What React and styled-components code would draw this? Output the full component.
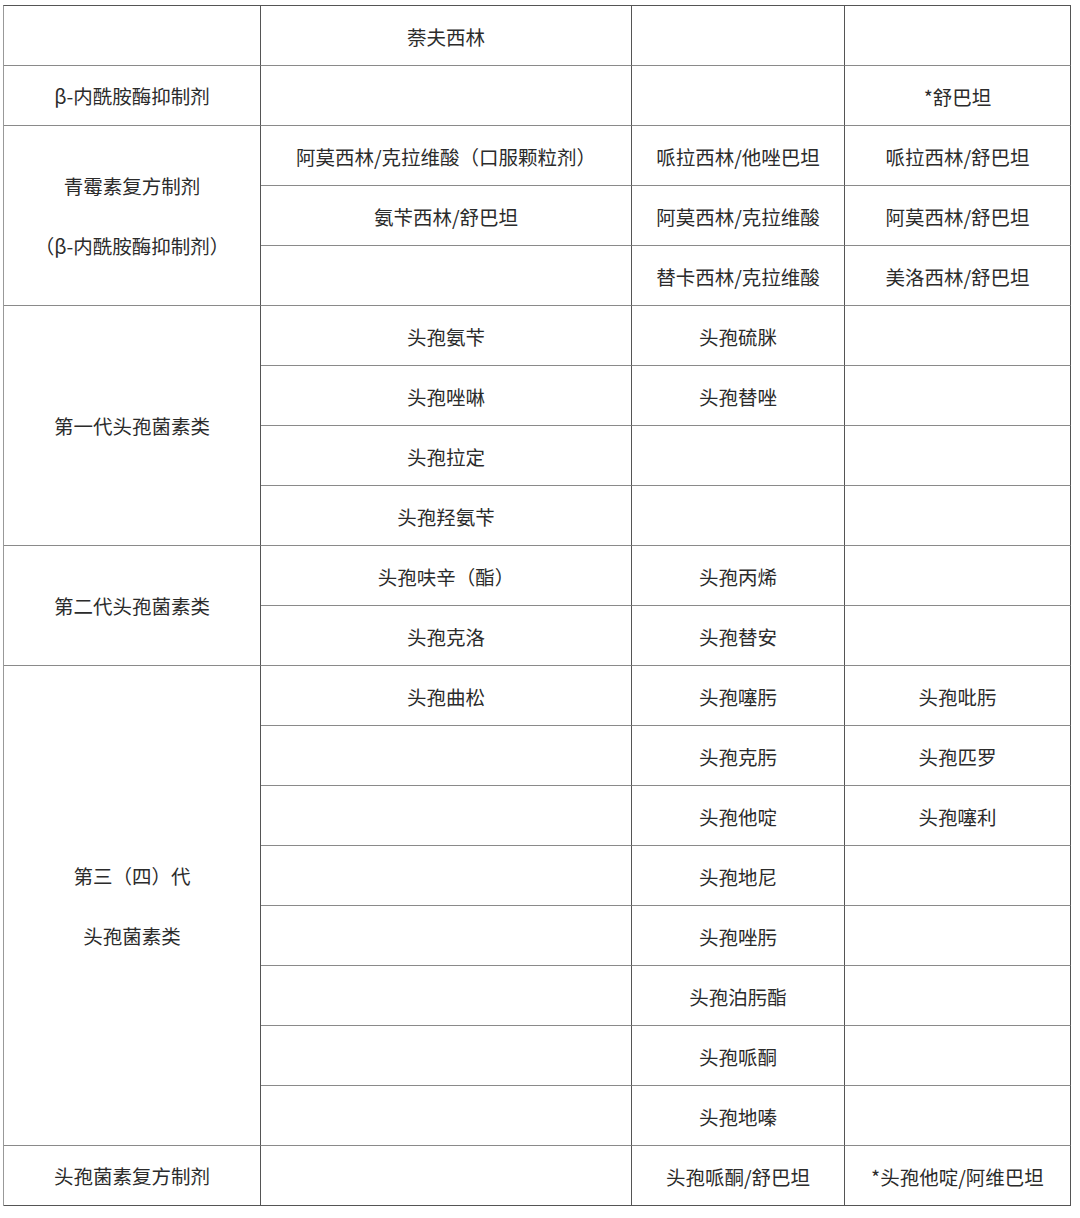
import React from "react";
import styled, { createGlobalStyle } from "styled-components";

const GlobalStyle = createGlobalStyle`
  html, body {
    margin: 0;
    padding: 0;
    background: #fff;
  }
  body {
    font-family: "Noto Sans CJK SC", "Noto Sans", sans-serif;
    color: #2b2b2b;
  }
`;

// each group: first column label (lines) + rows of the 3 other columns
const groups = [
  { label: [""], rows: [["萘夫西林", "", ""]] },
  { label: ["β-内酰胺酶抑制剂"], rows: [["", "", "*舒巴坦"]] },
  {
    label: ["青霉素复方制剂", "（β-内酰胺酶抑制剂）"],
    rows: [
      ["阿莫西林/克拉维酸（口服颗粒剂）", "哌拉西林/他唑巴坦", "哌拉西林/舒巴坦"],
      ["氨苄西林/舒巴坦", "阿莫西林/克拉维酸", "阿莫西林/舒巴坦"],
      ["", "替卡西林/克拉维酸", "美洛西林/舒巴坦"],
    ],
  },
  {
    label: ["第一代头孢菌素类"],
    rows: [
      ["头孢氨苄", "头孢硫脒", ""],
      ["头孢唑啉", "头孢替唑", ""],
      ["头孢拉定", "", ""],
      ["头孢羟氨苄", "", ""],
    ],
  },
  {
    label: ["第二代头孢菌素类"],
    rows: [
      ["头孢呋辛（酯）", "头孢丙烯", ""],
      ["头孢克洛", "头孢替安", ""],
    ],
  },
  {
    label: ["第三（四）代", "头孢菌素类"],
    rows: [
      ["头孢曲松", "头孢噻肟", "头孢吡肟"],
      ["", "头孢克肟", "头孢匹罗"],
      ["", "头孢他啶", "头孢噻利"],
      ["", "头孢地尼", ""],
      ["", "头孢唑肟", ""],
      ["", "头孢泊肟酯", ""],
      ["", "头孢哌酮", ""],
      ["", "头孢地嗪", ""],
    ],
  },
  {
    label: ["头孢菌素复方制剂"],
    rows: [["", "头孢哌酮/舒巴坦", "*头孢他啶/阿维巴坦"]],
  },
];

const App = () => {
  let rowStart = 1;
  return (
    <>
      <GlobalStyle />
      <Table>
        {groups.map((group, gi) => {
          const start = rowStart;
          rowStart += group.rows.length;
          return (
            <React.Fragment key={gi}>
              <LabelCell
                $row={start}
                $span={group.rows.length}
                $last={gi === groups.length - 1}
              >
                {group.label.map((line, li) => (
                  <Line key={li}>{line}</Line>
                ))}
              </LabelCell>
              {group.rows.map((row, ri) =>
                row.map((text, ci) => (
                  <Cell
                    key={`${ri}-${ci}`}
                    $row={start + ri}
                    $col={ci + 2}
                    $last={gi === groups.length - 1}
                  >
                    {text}
                  </Cell>
                ))
              )}
            </React.Fragment>
          );
        })}
      </Table>
    </>
  );
};

const Table = styled.div`
  display: grid;
  grid-template-columns: 257px 371px 213px 226px;
  grid-auto-rows: 60px;
  width: 1068px;
  margin: 5px 0 0 3px;
  border-top: 1px solid #555;
  border-left: 1px solid #999;
  box-sizing: border-box;
`;

const BaseCell = styled.div`
  display: flex;
  align-items: center;
  justify-content: center;
  box-sizing: border-box;
  padding-top: 1px;
  border-right: 1px solid #555;
  border-bottom: 1px solid ${(p) => (p.$last ? "#555" : "#8a8a8a")};
  font-size: 19.5px;
  color: #2b2b2b;
  white-space: nowrap;
`;

const Cell = styled(BaseCell)`
  grid-row: ${(p) => p.$row};
  grid-column: ${(p) => p.$col};
`;

const LabelCell = styled(BaseCell)`
  grid-row: ${(p) => p.$row} / span ${(p) => p.$span};
  grid-column: 1;
  flex-direction: column;
`;

const Line = styled.div`
  line-height: 60px;
  height: 60px;
`;

export default App;
